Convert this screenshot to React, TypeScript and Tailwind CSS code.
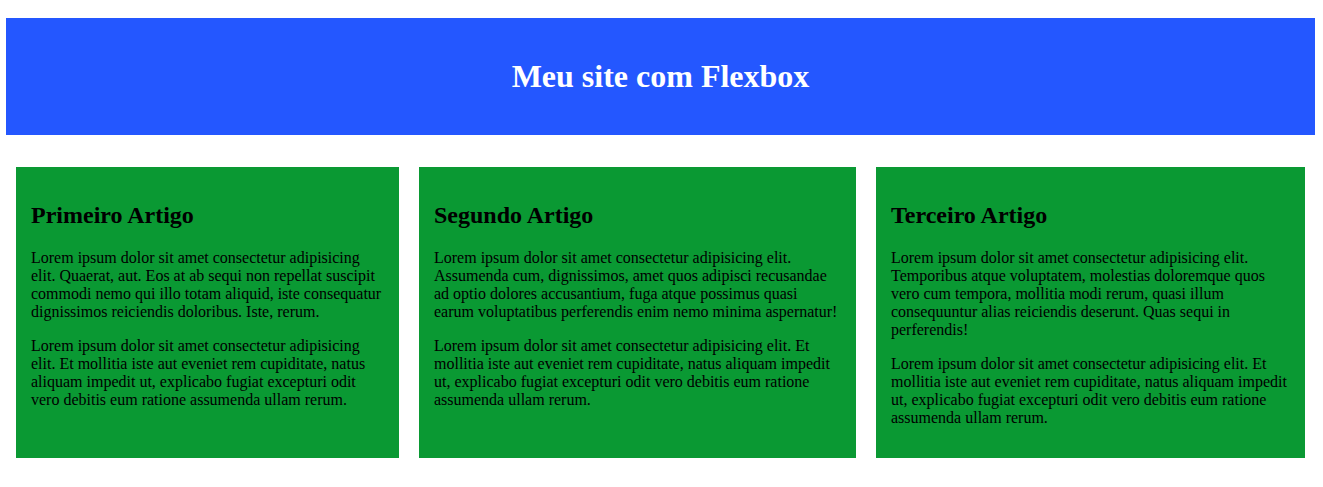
import React from "react";

const cards = [
  {
    w: "w-[383px]",
    title: "Primeiro Artigo",
    p1: "Lorem ipsum dolor sit amet consectetur adipisicing elit. Quaerat, aut. Eos at ab sequi non repellat suscipit commodi nemo qui illo totam aliquid, iste consequatur dignissimos reiciendis doloribus. Iste, rerum.",
    p2: "Lorem ipsum dolor sit amet consectetur adipisicing elit. Et mollitia iste aut eveniet rem cupiditate, natus aliquam impedit ut, explicabo fugiat excepturi odit vero debitis eum ratione assumenda ullam rerum.",
  },
  {
    w: "w-[437px]",
    title: "Segundo Artigo",
    p1: "Lorem ipsum dolor sit amet consectetur adipisicing elit. Assumenda cum, dignissimos, amet quos adipisci recusandae ad optio dolores accusantium, fuga atque possimus quasi earum voluptatibus perferendis enim nemo minima aspernatur!",
    p2: "Lorem ipsum dolor sit amet consectetur adipisicing elit. Et mollitia iste aut eveniet rem cupiditate, natus aliquam impedit ut, explicabo fugiat excepturi odit vero debitis eum ratione assumenda ullam rerum.",
  },
  {
    w: "w-[429px]",
    title: "Terceiro Artigo",
    p1: "Lorem ipsum dolor sit amet consectetur adipisicing elit. Temporibus atque voluptatem, molestias doloremque quos vero cum tempora, mollitia modi rerum, quasi illum consequuntur alias reiciendis deserunt. Quas sequi in perferendis!",
    p2: "Lorem ipsum dolor sit amet consectetur adipisicing elit. Et mollitia iste aut eveniet rem cupiditate, natus aliquam impedit ut, explicabo fugiat excepturi odit vero debitis eum ratione assumenda ullam rerum.",
  },
];

export default function App() {
  return (
    <div className="min-h-[487px] bg-white pt-[18px] font-['Liberation_Serif',serif] text-black">
      <header className="ml-[6px] mr-[8px] flex h-[117px] items-center justify-center bg-[#2457ff]">
        <h1 className="text-[32px] font-bold leading-[37px] text-white">Meu site com Flexbox</h1>
      </header>
      <main className="mt-[32px] flex items-stretch gap-[20px] pl-[16px] pr-[18px]">
        {cards.map((c) => (
          <article key={c.title} className={`${c.w} shrink-0 bg-[#0a9933] px-[15px] pt-[15px] pb-[15px]`}>
            <h2 className="mt-[20px] mb-[20px] text-[24px] font-bold leading-[27px]">{c.title}</h2>
            <p className="mb-[16px] text-[16px] leading-[18px]">{c.p1}</p>
            <p className="mb-[16px] text-[16px] leading-[18px]">{c.p2}</p>
          </article>
        ))}
      </main>
    </div>
  );
}
